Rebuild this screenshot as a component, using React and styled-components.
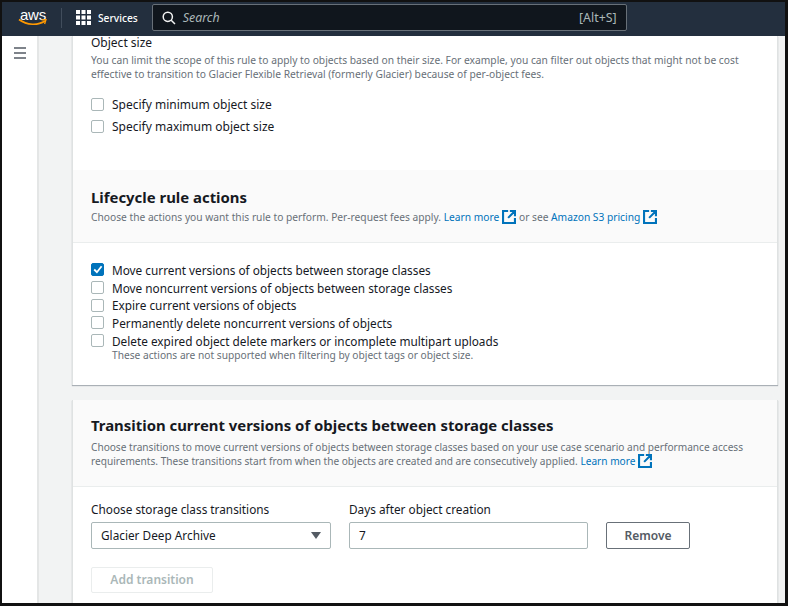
import React from 'react';
import styled, { createGlobalStyle } from 'styled-components';

const GlobalStyle = createGlobalStyle`
  * {
    box-sizing: border-box;
  }

  html,
  body {
    margin: 0;
    padding: 0;
    background: #fff;
  }

  body {
    font-family: 'Noto Sans', 'Open Sans', sans-serif;
  }
`;

const ExternalIcon = () => (
  <ExternalSvg viewBox="2 2 16 16" fill="none">
    <path d="M9 3.2H3.2v13.6h13.6V11M11 3.2h5.8V9M16.8 3.2L9 11" stroke="#0073bb" strokeWidth="2.4" />
  </ExternalSvg>
);

const AwsLogo = () => (
  <LogoWrap>
    <LogoText>aws</LogoText>
    <svg width="30" height="9" viewBox="0 0 30 9" fill="none">
      <path d="M1 1.5C9 7.5 20 7.5 27 3" stroke="#ff9900" strokeWidth="1.6" />
      <path d="M23.5 1.8L28 1.6L26.6 6" stroke="#ff9900" strokeWidth="1.3" />
    </svg>
  </LogoWrap>
);

const GridIcon = () => (
  <svg width="15" height="15" viewBox="0 0 15 15" fill="#fff">
    {[0, 5.5, 11].map(y =>
      [0, 5.5, 11].map(x => <rect key={`${x}-${y}`} x={x} y={y} width="4" height="4" />)
    )}
  </svg>
);

const SearchIcon = () => (
  <svg width="14" height="14" viewBox="0 0 14 14" fill="none" stroke="#f2f3f3" strokeWidth="1.5">
    <circle cx="5.8" cy="5.8" r="4.6" />
    <path d="M9.2 9.2L13 13" />
  </svg>
);

const MenuIcon = () => (
  <svg width="14" height="12" viewBox="0 0 14 12" fill="none" stroke="#545b64" strokeWidth="1.5">
    <path d="M1 1h12M1 6h12M1 11h12" />
  </svg>
);

const CheckBox = ({ checked }) => (
  <Box $checked={checked}>
    {checked && (
      <svg width="10" height="9" viewBox="0 0 10 9" fill="none">
        <path d="M1.2 4.5L3.9 7.2L8.6 1.2" stroke="#fff" strokeWidth="1.8" />
      </svg>
    )}
  </Box>
);

const actions = [
  { label: 'Move current versions of objects between storage classes', checked: true },
  { label: 'Move noncurrent versions of objects between storage classes' },
  { label: 'Expire current versions of objects' },
  { label: 'Permanently delete noncurrent versions of objects' },
  { label: 'Delete expired object delete markers or incomplete multipart uploads' },
];

const App = () => {
  return (
    <Frame>
      <GlobalStyle />
      <TopBar>
        <AwsLogo />
        <BarDivider />
        <ServicesButton>
          <GridIcon />
          <span>Services</span>
        </ServicesButton>
        <SearchBox>
          <SearchIcon />
          <SearchHint>Search</SearchHint>
          <Shortcut>[Alt+S]</Shortcut>
        </SearchBox>
      </TopBar>

      <Body>
        <SideRail>
          <MenuIcon />
        </SideRail>

        <Main>
          <Card>
            <ObjectSize>
              <FieldTitle>Object size</FieldTitle>
              <Hint>
                You can limit the scope of this rule to apply to objects based on their size. For
                example, you can filter out objects that might not be cost effective to transition
                to Glacier Flexible Retrieval (formerly Glacier) because of per-object fees.
              </Hint>
              <SizeOptions>
                <OptionRow>
                  <CheckBox />
                  Specify minimum object size
                </OptionRow>
                <OptionRow>
                  <CheckBox />
                  Specify maximum object size
                </OptionRow>
              </SizeOptions>
            </ObjectSize>

            <SectionHeader $height={73} $top={17}>
              <Heading $gap={3}>Lifecycle rule actions</Heading>
              <HeaderHint $size={10.22}>
                Choose the actions you want this rule to perform. Per-request fees apply.{' '}
                <DocLink>Learn more</DocLink>
                <ExternalIcon /> or see <DocLink>Amazon S3 pricing</DocLink>
                <ExternalIcon />
              </HeaderHint>
            </SectionHeader>

            <ActionList>
              {actions.map(action => (
                <ActionRow key={action.label}>
                  <CheckBox checked={action.checked} />
                  {action.label}
                </ActionRow>
              ))}
              <ActionNote>These actions are not supported when filtering by object tags or object size.</ActionNote>
            </ActionList>
          </Card>

          <Card>
            <SectionHeader $height={87} $top={15}>
              <Heading $gap={5}>Transition current versions of objects between storage classes</Heading>
              <HeaderHint $size={10.12}>
                Choose transitions to move current versions of objects between storage classes based
                on your use case scenario and performance access requirements. These transitions
                start from when the objects are created and are consecutively applied.{' '}
                <DocLink>Learn more</DocLink>
                <ExternalIcon />
              </HeaderHint>
            </SectionHeader>

            <TransitionBody>
              <TransitionRow>
                <Field>
                  <FieldLabel>Choose storage class transitions</FieldLabel>
                  <SelectBox>
                    Glacier Deep Archive
                    <Caret />
                  </SelectBox>
                </Field>
                <Field>
                  <FieldLabel>Days after object creation</FieldLabel>
                  <DaysBox>7</DaysBox>
                </Field>
                <RemoveButton>Remove</RemoveButton>
              </TransitionRow>
              <AddButton>Add transition</AddButton>
            </TransitionBody>
          </Card>
        </Main>
      </Body>
    </Frame>
  );
};

export default App;

const Frame = styled.div`
  width: 788px;
  height: 606px;
  border: 2px solid #111;
  border-right-width: 3px;
  border-bottom-width: 3px;
  display: flex;
  flex-direction: column;
  overflow: hidden;
  background: #f2f3f3;
`;

const TopBar = styled.header`
  height: 34px;
  flex: none;
  display: flex;
  align-items: center;
  background: #232f3e;
  color: #fff;
  padding: 0 0 3px 16px;
`;

const LogoWrap = styled.div`
  width: 30px;
  height: 24px;
  display: flex;
  flex-direction: column;
  align-items: center;
  color: #fff;

  svg {
    margin-top: -5px;
  }
`;

const LogoText = styled.span`
  font-family: 'Liberation Sans', sans-serif;
  font-size: 15px;
  line-height: 17px;
  letter-spacing: -0.2px;
`;

const BarDivider = styled.div`
  width: 1px;
  height: 20px;
  margin-left: 13px;
  background: #414d5c;
`;

const ServicesButton = styled.div`
  display: flex;
  align-items: center;
  gap: 7px;
  margin-left: 14px;
  font-size: 10.2px;
  font-weight: 500;
`;

const SearchBox = styled.div`
  width: 475px;
  height: 27px;
  margin-left: 14px;
  padding: 0 9px;
  display: flex;
  align-items: center;
  background: #10161d;
  border: 1px solid #687078;
  border-radius: 2px;
`;

const SearchHint = styled.span`
  margin-left: 7px;
  font-size: 12.4px;
  font-style: italic;
  color: #aab7b8;
`;

const Shortcut = styled.span`
  margin-left: auto;
  font-size: 12.4px;
  color: #aab7b8;
`;

const Body = styled.div`
  flex: 1;
  min-height: 0;
  display: flex;
`;

const SideRail = styled.aside`
  width: 37px;
  flex: none;
  padding: 11px 0 0 11px;
  background: #fff;
  border-right: 2px solid #e4e6e6;

  svg {
    display: block;
  }
`;

const Main = styled.main`
  flex: 1;
  min-width: 0;
  padding: 0 7px 0 33px;
  display: flex;
  flex-direction: column;
  gap: 15px;
`;

const Card = styled.section`
  flex: none;
  background: #fff;
  border-left: 1px solid #dfe2e2;
  border-right: 1px solid #dfe2e2;
  box-shadow: 0 1px 1px 0 #aab0b6;
`;

const ObjectSize = styled.div`
  height: 134px;
  padding: 0 18px;
`;

const FieldTitle = styled.div`
  font-size: 12px;
  line-height: 13px;
  color: #16191f;
`;

const Hint = styled.p`
  margin: 4px 0 0;
  font-size: 10.25px;
  line-height: 14px;
  color: #687078;
`;

const HeaderHint = styled.p`
  margin: 0;
  font-size: ${props => props.$size}px;
  line-height: 14px;
  color: #687078;
`;

const SizeOptions = styled.div`
  margin-top: 16px;
  display: flex;
  flex-direction: column;
  gap: 8px;
`;

const OptionRow = styled.label`
  height: 14px;
  display: flex;
  align-items: center;
  gap: 8px;
  font-size: 12px;
  color: #16191f;
`;

const Box = styled.span`
  width: 13px;
  height: 13px;
  flex: none;
  display: flex;
  align-items: center;
  justify-content: center;
  border-radius: 2px;
  border: 1px solid ${props => (props.$checked ? '#0073bb' : '#aab7b8')};
  background: ${props => (props.$checked ? '#0073bb' : '#fff')};
`;

const SectionHeader = styled.div`
  height: ${props => props.$height}px;
  padding: ${props => props.$top}px 18px 0;
  background: #fafafa;
  border-bottom: 1px solid #eaeded;
`;

const Heading = styled.h2`
  margin: 0 0 ${props => props.$gap}px;
  font-size: 14.9px;
  line-height: 20px;
  font-weight: 700;
  color: #16191f;
`;

const DocLink = styled.a`
  color: #0073bb;
`;

const ExternalSvg = styled.svg`
  width: 14px;
  height: 14px;
  margin-left: 3px;
  vertical-align: -3px;
`;

const ActionList = styled.div`
  height: 142px;
  padding: 18px 18px 0;
`;

const ActionRow = styled.label`
  height: 17.7px;
  display: flex;
  align-items: center;
  gap: 8px;
  font-size: 11.8px;
  color: #16191f;
`;

const ActionNote = styled.div`
  margin-left: 21px;
  font-size: 10.2px;
  line-height: 13px;
  color: #687078;
`;

const TransitionBody = styled.div`
  padding: 14px 18px 40px;
`;

const TransitionRow = styled.div`
  display: flex;
  align-items: flex-end;
  gap: 18px;
`;

const Field = styled.div`
  display: flex;
  flex-direction: column;
  gap: 5px;
`;

const FieldLabel = styled.div`
  font-size: 11.8px;
  line-height: 16px;
  color: #16191f;
`;

const SelectBox = styled.div`
  width: 240px;
  height: 27px;
  padding: 0 9px 2px;
  display: flex;
  align-items: center;
  justify-content: space-between;
  font-size: 11.8px;
  color: #16191f;
  background: #fff;
  border: 1px solid #aab7b8;
  border-radius: 2px;
`;

const Caret = styled.span`
  width: 0;
  height: 0;
  margin-top: 2px;
  border-left: 5px solid transparent;
  border-right: 5px solid transparent;
  border-top: 7px solid #545b64;
`;

const DaysBox = styled(SelectBox)`
  width: 239px;
`;

const RemoveButton = styled.button`
  width: 84px;
  height: 27px;
  padding: 0;
  font-family: inherit;
  font-size: 12px;
  font-weight: 600;
  color: #545b64;
  background: #fff;
  border: 1px solid #687078;
  border-radius: 2px;
`;

const AddButton = styled.button`
  display: block;
  width: 122px;
  height: 26px;
  margin-top: 18px;
  padding: 0 0 2px;
  font-family: inherit;
  font-size: 12px;
  font-weight: 600;
  color: #aab7b8;
  background: #fff;
  border: 1px solid #eaeded;
  border-radius: 2px;
`;
